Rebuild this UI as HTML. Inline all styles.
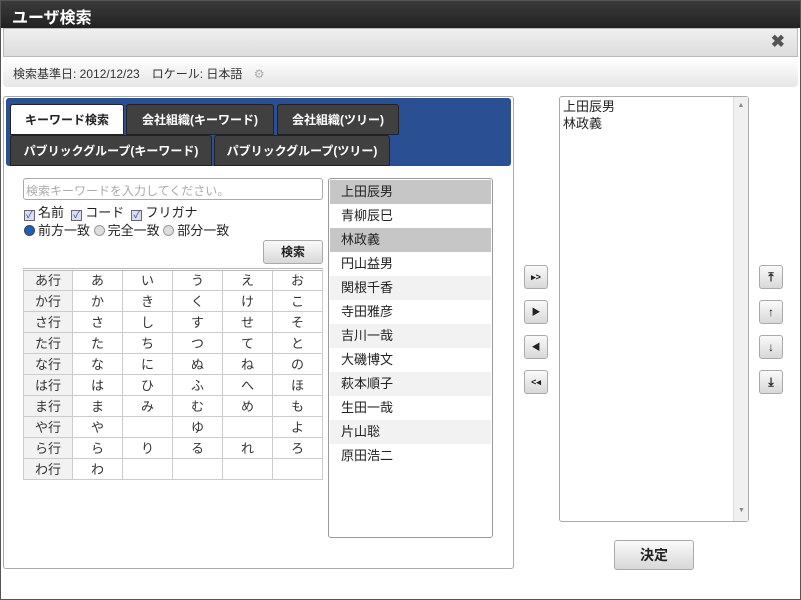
<!DOCTYPE html>
<html><head><meta charset="utf-8"><style>
*{box-sizing:border-box;margin:0;padding:0}
body{width:801px;height:600px;position:relative;overflow:hidden;background:#fff;font-family:"Liberation Sans","Noto Sans CJK JP",sans-serif;font-size:13px;color:#222}
.a{position:absolute}
.win{left:0;top:0;width:801px;height:600px;border:1px solid #555}
.title{left:1px;top:1px;width:799px;height:27px;background:linear-gradient(#3a3a3a,#222);color:#fff;font-size:16px;font-weight:bold;padding:3px 0 0 11px}
.bar{left:3px;top:28px;width:795px;height:29px;background:linear-gradient(#f0f0f0,#dcdcdc);border:1px solid #bbb}
.info{left:3px;top:58px;width:795px;height:29px;background:linear-gradient(#fff,#e6e6e6);border-radius:0 0 4px 4px;font-size:12px;padding:7px 0 0 10px;color:#333}
.panel{left:3px;top:96px;width:511px;height:473px;border:1px solid #aaa;border-radius:3px}
.tabs{left:6px;top:98px;width:505px;height:68px;background:#2b4f93;border-radius:3px}
.tab{position:absolute;height:31px;background:#404040;color:#fff;font-size:12px;font-weight:bold;text-align:center;line-height:30px;border:1px solid #222;border-radius:3px 3px 0 0}
.tab.on{background:#fff;color:#222}
.inp{left:23px;top:178px;width:300px;height:22px;border:1px solid #aaa;border-radius:3px;color:#aaa;font-size:12px;padding:3px 2px}
.btn{position:absolute;border:1px solid #aaa;border-radius:3px;background:linear-gradient(#fafafa,#d8d8d8);text-align:center;font-weight:bold}
table{position:absolute;left:23px;top:268px;border-collapse:collapse;border-top:3px double #bbb}
td{border:1px solid #ccc;width:50px;height:21px;text-align:center;font-size:13px;color:#333;line-height:19px;padding:0}
td.h{width:49px;background:#f2f2f2}
.list{left:328px;top:178px;width:165px;height:360px;border:1px solid #999;border-radius:3px;padding:1px}
.list div{height:24px;line-height:24px;padding-left:11px;font-size:13px}
.cb{display:inline-block;width:11px;height:11px;border:1px solid #667;background:#dde;vertical-align:-1px;margin-right:3px;font-size:10px;line-height:9px;color:#2a4fa0;text-align:center}
.rd{display:inline-block;width:11px;height:11px;border-radius:50%;border:1px solid #999;background:#ddd;vertical-align:-1px;margin-right:3px}
.sb{width:24px;height:24px;font-size:9px;line-height:22px;color:#222}
</style></head><body>
<div class="a win"></div>
<div class="a title">ユーザ検索</div>
<div class="a bar"><span class="a" style="right:12px;top:3px;font-size:17px;font-weight:bold;color:#555">✖</span></div>
<div class="a info">検索基準日: 2012/12/23　ロケール: 日本語 <span style="color:#aaa;margin-left:8px">⚙</span></div>
<div class="a panel"></div>
<div class="a tabs"></div>
<div class="tab on" style="left:10px;top:104px;width:114px">キーワード検索</div>
<div class="tab" style="left:126px;top:104px;width:148px">会社組織(キーワード)</div>
<div class="tab" style="left:277px;top:104px;width:122px">会社組織(ツリー)</div>
<div class="tab" style="left:10px;top:135px;width:202px">パブリックグループ(キーワード)</div>
<div class="tab" style="left:214px;top:135px;width:176px">パブリックグループ(ツリー)</div>
<div class="a inp">検索キーワードを入力してください。</div>
<div class="a" style="left:24px;top:202px;font-size:13px"><span class="cb">✓</span>名前 &nbsp;<span class="cb">✓</span>コード &nbsp;<span class="cb">✓</span>フリガナ</div>
<div class="a" style="left:24px;top:220px;font-size:13px"><span class="rd" style="background:#1b5fb8;border-color:#444"></span>前方一致 <span class="rd"></span>完全一致 <span class="rd"></span>部分一致</div>
<div class="btn" style="left:263px;top:240px;width:60px;height:24px;line-height:22px;font-size:12px">検索</div>
<table>
<tr><td class="h">あ行</td><td>あ</td><td>い</td><td>う</td><td>え</td><td>お</td></tr>
<tr><td class="h">か行</td><td>か</td><td>き</td><td>く</td><td>け</td><td>こ</td></tr>
<tr><td class="h">さ行</td><td>さ</td><td>し</td><td>す</td><td>せ</td><td>そ</td></tr>
<tr><td class="h">た行</td><td>た</td><td>ち</td><td>つ</td><td>て</td><td>と</td></tr>
<tr><td class="h">な行</td><td>な</td><td>に</td><td>ぬ</td><td>ね</td><td>の</td></tr>
<tr><td class="h">は行</td><td>は</td><td>ひ</td><td>ふ</td><td>へ</td><td>ほ</td></tr>
<tr><td class="h">ま行</td><td>ま</td><td>み</td><td>む</td><td>め</td><td>も</td></tr>
<tr><td class="h">や行</td><td>や</td><td></td><td>ゆ</td><td></td><td>よ</td></tr>
<tr><td class="h">ら行</td><td>ら</td><td>り</td><td>る</td><td>れ</td><td>ろ</td></tr>
<tr><td class="h">わ行</td><td>わ</td><td></td><td></td><td></td><td></td></tr>
</table>
<div class="a list">
<div style="background:#c6c6c6">上田辰男</div><div>青柳辰巳</div><div style="background:#c6c6c6">林政義</div><div>円山益男</div>
<div style="background:#f2f2f2">関根千香</div><div>寺田雅彦</div><div style="background:#f2f2f2">吉川一哉</div><div>大磯博文</div>
<div style="background:#f2f2f2">萩本順子</div><div>生田一哉</div><div style="background:#f2f2f2">片山聡</div><div>原田浩二</div>
</div>
<div class="btn sb" style="left:524px;top:265px">▸&gt;</div>
<div class="btn sb" style="left:524px;top:300px">▶</div>
<div class="btn sb" style="left:524px;top:335px">◀</div>
<div class="btn sb" style="left:524px;top:370px">&lt;◂</div>
<div class="a" style="left:559px;top:96px;width:190px;height:426px;border:1px solid #aaa;border-radius:3px;font-size:13px;padding:1px 3px;line-height:17px">上田辰男<br>林政義
<div class="a" style="right:0;top:0;width:15px;height:424px;background:#f0f0f0;border-left:1px solid #ddd;font-size:7px;color:#888;text-align:center">▲<div class="a" style="bottom:2px;width:15px">▼</div></div></div>
<div class="btn sb" style="left:759px;top:265px;font-size:12px">⤒</div>
<div class="btn sb" style="left:759px;top:300px;font-size:12px">↑</div>
<div class="btn sb" style="left:759px;top:335px;font-size:12px">↓</div>
<div class="btn sb" style="left:759px;top:370px;font-size:12px">⤓</div>
<div class="btn" style="left:614px;top:540px;width:80px;height:30px;line-height:28px;font-size:14px">決定</div>
</body></html>
